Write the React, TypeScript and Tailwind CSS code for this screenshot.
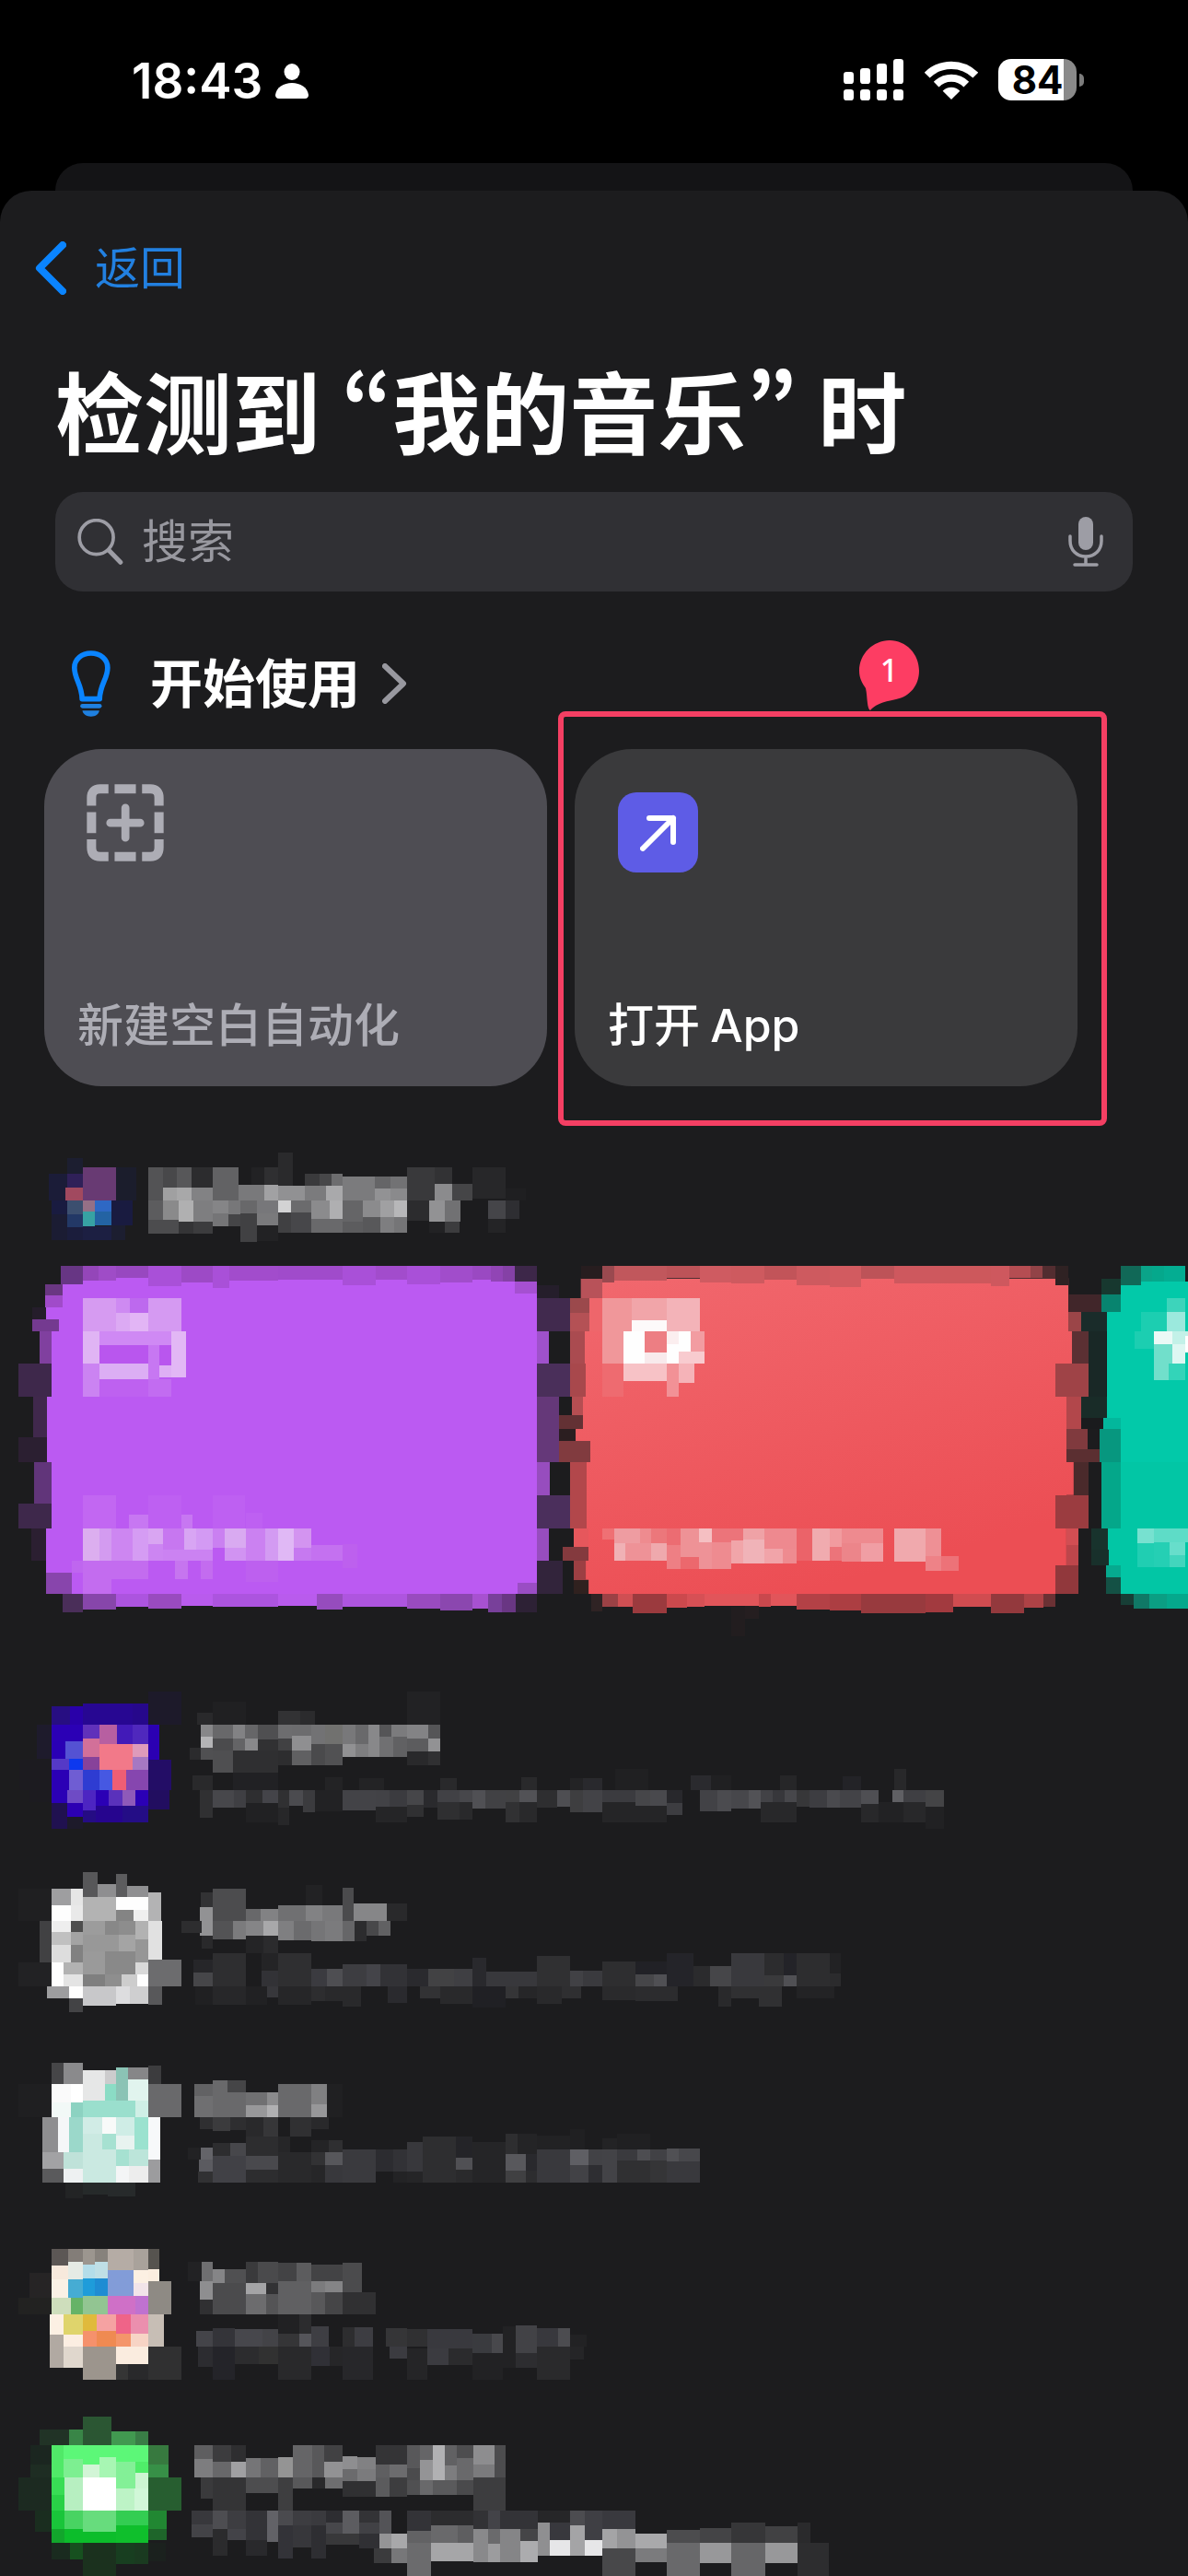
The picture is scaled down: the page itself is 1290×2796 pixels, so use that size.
import React from "react";

const cjk = "font-['Inter','Noto_Sans_CJK_SC',sans-serif]";

type MosaicProps = { tiles: string; viewBox: string; className: string };

/** Pixelated tiles, each written as "left top right bottom hex". */
function Mosaic({ tiles, viewBox, className }: MosaicProps) {
  return (
    <svg
      viewBox={viewBox}
      preserveAspectRatio="none"
      shapeRendering="crispEdges"
      aria-hidden="true"
      className={className}
    >
      {tiles
        .split(";")
        .map((t) => t.trim())
        .filter(Boolean)
        .map((t, i) => {
          const [x, y, r, b, c] = t.split(" ");
          return <rect key={i} x={x} y={y} width={+r - +x} height={+b - +y} fill={"#" + c} />;
        })}
    </svg>
  );
}

const sectionTiles = `
131 129 179 215 1b1c38;179 79 220 129 1c1e30;179 129 220 175 2f2058;220 109 309 215 683a73;309 109 363 215 1b1d2c;174 175 220 215 a1495f;
137 215 179 260 191b40;179 215 220 260 3c4f6f;220 215 252 252 957086;252 215 296 252 2e68c4;220 252 252 299 37a2a3;252 252 296 296 2363a3;296 215 353 295 191b40;
137 260 179 342 1b1c33;179 260 220 301 233866;179 301 220 342 1b1d3c;220 299 296 342 1c1f42;296 296 333 342 1c1e30;
394 109 434 215 535355;434 109 470 175 48484a;470 109 510 175 575759;510 109 566 175 2c2c2e;566 109 635 215 626264;
434 175 470 215 a0a0a1;470 175 510 215 a8a8a9;510 175 566 215 828284;394 215 434 277 5c5c5e;434 215 475 277 8a8a8b;475 215 514 284 b0b0b1;514 215 566 284 7e7e80;
394 277 475 321 4c4c4e;475 284 514 321 343436;514 284 566 321 3c3c3e;566 215 608 257 858587;608 215 639 260 777779;566 257 608 298 757577;608 260 639 298 454547;
669 109 703 166 222224;703 109 740 166 2f2f31;740 62 779 169 2a2a2c;635 166 703 215 79797b;703 166 740 215 a1a1a3;639 215 684 257 68686a;684 215 740 257 77777a;639 257 684 348 414143;684 257 740 295 7a7a7c;684 295 740 346 222224;
740 169 811 215 919193;740 215 774 254 d3d3d4;774 215 828 254 6b6b6d;740 254 774 320 404042;774 254 828 320 47474a;811 130 850 169 3a3a3c;850 130 882 169 474749;882 130 911 169 6d6d6f;811 169 867 215 7b7b7d;867 169 911 215 a9a9ab;828 215 877 275 8b8b8d;877 215 911 275 afafb1;828 275 911 320 69696b;
911 139 997 215 7b7b7d;997 139 1039 178 656567;1039 139 1083 178 727274;997 178 1039 215 929294;1039 178 1083 215 8a8a8c;911 215 965 284 656567;965 215 1012 269 8b8b8d;1012 215 1048 269 a0a0a2;1048 215 1083 269 b7b7b9;911 284 965 320 5c5c5e;965 269 1012 320 58585a;1012 269 1048 320 7e7e80;1048 269 1083 320 757577;
1083 109 1156 215 39393b;1156 109 1203 163 323234;1083 215 1142 281 2c2c2e;1156 163 1203 215 8b8b8d;1203 163 1257 215 454547;1257 109 1345 210 272729;1142 215 1183 284 929294;1183 215 1225 284 717173;1142 284 1183 320 222224;1183 284 1223 320 3c3c3e;1298 215 1345 275 454549;1345 215 1382 275 2e2e32;1298 275 1345 320 242426;1345 178 1398 215 1f1f21`;

const violetTiles = `
220 460 1370 490 bb5af2;137 485 1428 1480 bb5af2;162 426 220 485 673684;220 426 262 474 9446b9;262 426 309 474 9f4cc7;309 426 394 465 9848c0;394 426 483 490 a950d8;483 426 566 479 9d4ac6;566 426 609 497 a950d8;609 426 740 474 a24ccc;740 426 911 471 a04bcb;911 426 1000 488 a950d8;1000 426 1083 471 a24ccc;1083 426 1171 485 a950d8;1171 426 1257 479 a14dcb;1257 426 1306 471 9a49c2;1306 426 1338 476 9145b5;1338 426 1370 476 8541a6;1370 426 1428 476 3d2749;
1370 476 1428 515 a550d1;
120 485 167 521 6a3782;120 521 167 559 a04bc9;122 559 167 598 bb5af2;86 559 122 598 251d2b;86 598 157 636 743a90;105 636 137 740 80409f;49 740 137 846 3e284b;125 846 137 1055 bb5af2;88 846 125 976 40284c;49 976 125 1055 2b1f31;91 1055 137 1163 61357a;91 1163 137 1189 61357a;49 1189 137 1269 3e284b;122 1269 137 1411 bb5af2;84 1269 122 1372 2b1f31;122 1411 191 1478 8845ac;
1428 489 1487 530 251e2b;1428 530 1517 636 412a4e;1428 636 1460 740 9f51cb;1428 740 1517 846 4a2f5a;1428 846 1487 1055 653879;1428 1055 1463 1163 974dbe;1428 1163 1517 1269 4b2f5c;1428 1269 1460 1372 974dbe;1428 1372 1497 1478 32243b;1377 1444 1428 1478 9a4dc4;
167 1478 220 1537 4a2e59;220 1478 309 1530 8746aa;309 1478 394 1521 ac54df;394 1478 483 1527 994bbf;483 1478 566 1518 b95bed;566 1478 740 1521 ac54df;740 1478 843 1518 b95bed;843 1478 911 1530 964cbd;911 1478 1083 1521 ae55df;1083 1478 1171 1527 994bbf;1171 1478 1257 1532 8b47af;1257 1478 1298 1527 a751d0;1298 1478 1335 1538 78409a;1335 1478 1372 1538 693683;1372 1478 1428 1538 2d2135;
220 530 309 636 d69bf1;309 530 345 577 ce8af2;345 530 394 577 bd69ee;394 530 483 636 d59af2;309 577 345 636 dcaaf3;345 577 394 636 e2b5f5;220 636 265 740 e0b4f4;265 636 456 680 cf89f4;456 636 495 783 e2b7f5;265 680 394 740 b956ee;394 680 424 846 c777f2;424 680 456 746 b956ee;424 746 456 783 deaff4;265 740 394 790 dcaef4;220 740 265 846 cb83f2;394 790 456 846 c26cf1;265 790 394 846 be61f0;
220 1163 309 1269 c267f2;394 1163 483 1269 be60f2;566 1163 651 1269 be60f2;343 1225 394 1269 c777f2;483 1225 511 1269 c777f2;653 1219 697 1269 be60f2;220 1269 265 1372 dcaeef;265 1269 296 1372 d39bf0;296 1269 353 1372 cd86f1;353 1269 394 1372 d59cf3;394 1269 434 1318 d9a5f2;394 1318 434 1372 cc85f2;434 1269 490 1372 c777f0;434 1337 566 1372 cb82f2;490 1269 523 1337 d8a5f3;523 1269 566 1337 d39af3;566 1269 598 1330 ca80f1;598 1269 653 1330 d9aaf1;598 1330 653 1372 d193f2;653 1269 706 1372 cb81f1;706 1269 740 1372 d39bf2;740 1269 782 1372 e0b8f5;782 1269 828 1330 d394f0;782 1330 828 1372 c679f0;828 1322 911 1372 c471f0;911 1320 951 1395 bd60ee;220 1372 296 1478 c36cef;296 1372 394 1432 c36cef;465 1372 500 1432 c675ef;534 1372 566 1432 c36cef;653 1372 740 1440 bd60ef;191 1372 220 1411 bf66ef`;

const coralTiles = `
70 442 123 501 b85259;91 501 123 602 ee666b;70 403 123 442 271d1f;123 403 152 454 9a494f;152 403 282 448 c1575c;282 403 364 440 bd5358;364 403 441 454 cf5b61;441 403 523 457 ce5a5f;523 403 602 445 c25459;602 403 684 461 ce5a5f;684 403 761 467 d25b60;761 403 843 442 bd5358;843 403 956 456 ce585e;956 403 1082 457 cd585c;1082 403 1127 465 ce585e;1127 403 1179 440 b54d52;1179 403 1209 440 924347;1209 403 1241 440 532d30;1241 403 1273 461 2f2223;1273 490 1354 543 41262a;
43 501 91 545 9b494c;43 545 91 602 b45155;43 602 80 700 aa4b50;43 700 82 801 a8484c;48 801 75 857 b54e52;16 857 75 899 633134;16 899 57 935 2b1e20;16 935 93 1000 813b3f;43 1000 84 1201 b2474b;52 1201 89 1257 e6575c;25 1257 89 1298 843a3e;52 1298 82 1357 9c3f43;52 1357 89 1400 30211f;
1273 543 1304 602 9b4548;1282 602 1323 700 5b3033;1241 700 1323 801 9f4347;1268 801 1304 899 b2474b;1268 899 1320 960 803a3e;1268 960 1350 1000 5b2f31;1286 1000 1323 1100 4a2a2b;1241 1100 1323 1201 9b3c40;1268 1201 1298 1251 d14e53;1268 1251 1298 1313 bd464b;1241 1313 1298 1400 91383c;
95 1400 123 1453 2f2324;123 1400 161 1439 9b4145;161 1400 198 1439 cf4f53;198 1400 282 1459 9b3a3e;282 1400 332 1441 cb494d;332 1400 375 1439 d65055;375 1400 509 1436 e1555a;509 1400 539 1439 c9484d;539 1400 602 1436 e1555a;602 1400 684 1448 b34146;684 1400 761 1450 ac3e42;761 1400 920 1459 983a3e;920 1400 989 1456 a23a3f;989 1400 1082 1440 d04c50;1082 1400 1164 1459 93393d;1164 1400 1211 1441 ae4246;1211 1400 1241 1439 6b3134;475 1436 509 1475 251e20;441 1439 475 1528 221d1f;
123 501 195 700 f0979a;195 501 282 568 f1a5a9;282 501 364 602 f3b3b8;195 568 282 602 fdfafa;175 602 227 700 fefefe;227 602 282 666 ed7e83;227 666 282 700 f8eaec;282 602 311 641 fbeeef;311 602 341 664 fefefe;282 641 311 700 fefefe;341 602 375 664 f29ca1;311 664 375 700 f8cbcf;175 700 282 753 f7c2c6;282 700 311 801 f29196;311 700 350 759 f5b3b8;123 700 175 801 ee6b70;
123 1201 152 1234 ef7074;152 1201 216 1245 ee9ca1;152 1245 180 1298 f0b1b5;180 1245 243 1298 ee9297;216 1201 243 1245 ee8b8f;243 1201 282 1245 ec777b;243 1245 282 1298 efa9ad;282 1201 316 1251 ec6c72;282 1251 316 1324 ee7f84;316 1201 361 1287 ee9296;316 1287 361 1324 ec686d;361 1201 393 1242 f5bfc2;361 1242 393 1324 ee9297;393 1201 470 1242 ec747a;393 1242 441 1324 ee8b90;441 1238 470 1307 f1a5a9;470 1201 523 1236 efa2a6;470 1236 523 1307 f0b3b8;523 1201 602 1263 ee898f;523 1263 568 1307 f1a4a9;568 1263 602 1307 ee8b90;
602 1201 641 1298 eb6369;641 1201 684 1298 f0abaf;684 1201 714 1257 f19b9f;684 1257 714 1298 ec747a;714 1201 816 1245 ee8a8f;714 1245 761 1301 ec858a;761 1245 816 1301 f09ea4;843 1201 920 1301 f0a9ad;920 1201 959 1285 ee9095;920 1285 959 1330 ee8287;959 1285 1002 1330 ed7278`;

const tealTiles = `
1402 450 1568 1400 02c9a9;1402 1000 1568 1400 02c6a5;1368 543 1402 865 02c9a9;1354 442 1402 490 17382f;1354 490 1402 543 08846f;1402 403 1452 461 116857;1452 403 1480 450 0aa489;1480 403 1509 450 05a88c;1509 403 1561 450 04ad92;1304 543 1369 602 1a2c2a;1323 602 1367 700 192826;1323 700 1366 801 192826;1304 801 1368 865 192c28;1304 865 1359 899 1a1b1d;1359 865 1402 899 03b79c;1350 899 1402 1000 07977f;1354 1000 1402 1201 04a78a;1370 1201 1402 1313 02c6a5;1329 1201 1370 1265 18332d;1329 1265 1373 1313 18302b;1366 1313 1402 1350 06aa8f;1366 1350 1402 1400 145145;1402 1400 1434 1434 173e36;1434 1400 1473 1445 107866;1473 1400 1516 1445 0b9e83;1516 1400 1568 1445 05a88c;
1452 543 1516 602 1cceb1;1436 602 1484 655 1cceb1;1516 501 1561 543 3dd4bb;1516 543 1561 602 9be9dd;1484 602 1529 641 ebf9f6;1529 602 1568 641 c3f1e8;1484 641 1529 700 71dfcb;1529 641 1561 700 def7f2;1484 700 1520 750 71dfcb;1520 700 1561 750 33d4b9;1561 616 1568 666 ffffff;
1443 1201 1484 1245 77e1d0;1484 1201 1568 1242 5edcc7;1443 1245 1484 1318 20ceb2;1484 1242 1523 1318 25cfb4;1523 1242 1561 1283 67decb;1523 1283 1561 1318 42d5bd`;

type AppRow = { icon: string; text: string; iconBox: string; textBox: string; height: string };

const rows: AppRow[] = [
  {
    height: "h-[200px]",
    iconBox: "0 90 560 600",
    textBox: "560 90 1960 600",
    icon: `
451 108 551 216 1d1a2a;113 216 157 326 1e1b2c;58 329 157 429 1c1b20;90 429 157 468 1c1b20;157 156 213 216 270e82;213 156 252 216 2900a9;252 147 403 216 270792;403 147 451 216 26088b;157 216 252 270 2b00b5;157 270 200 326 2a00b5;200 270 252 326 5452d3;252 216 302 262 6031ba;302 216 356 279 b75fa1;356 216 403 279 421ab8;403 216 451 279 4f28bd;451 216 484 329 2b00b2;252 262 302 321 d27099;302 279 403 363 f27989;403 279 451 321 de9bbb;403 321 451 363 a678c2;157 326 210 363 5539c7;210 326 252 363 0d38ef;252 321 302 363 87429a;157 363 210 429 2b00b5;210 363 252 429 6f5dd3;252 363 302 429 2e3cd2;302 363 342 429 4658e2;342 363 384 429 ee5e74;384 363 451 429 8646af;451 329 521 429 230d66;451 429 515 491 220e60;
157 429 204 471 2b00b5;204 429 252 471 6e4bc5;252 429 291 495 4d25c2;291 429 330 480 2b00b5;330 429 372 480 5a31bb;372 429 412 480 8e5ab9;412 429 451 480 2b00b5;204 471 252 516 2c00b3;157 471 204 554 201150;252 495 291 534 250c84;291 480 372 534 26058e;372 480 451 534 240d86;204 516 252 554 1d1a2a`,
    text: `
599 177 647 216 29292b;647 141 748 216 202022;846 171 914 216 323234;914 171 958 216 2b2b2d;1238 108 1338 216 222224;610 216 647 255 878789;610 255 647 291 b4b4b6;577 291 610 329 2b2b2d;610 291 647 329 505052;647 216 708 261 68686a;708 216 745 261 828284;745 216 784 261 666668;784 216 846 264 4f4f51;647 261 708 300 4b4b4d;708 261 745 300 646466;745 261 784 300 88888a;784 264 846 300 313133;647 300 708 372 4f4f51;708 300 846 372 2f2f31;
846 216 888 261 6d6d6f;846 261 888 300 414143;846 300 888 348 2d2d2f;888 216 946 252 6c6c6e;888 252 946 300 8f8f91;888 300 946 348 606062;946 216 989 279 727274;989 216 1042 279 71716f;946 279 989 348 4a4a4c;989 279 1042 348 515153;1042 216 1081 279 78787a;1081 216 1120 279 69696b;1120 216 1154 321 88888a;1042 279 1081 321 919193;1081 279 1120 321 7e7e80;1154 216 1190 255 555557;1190 216 1238 255 7b7b7d;1154 255 1196 321 707072;1196 255 1238 321 616163;1238 216 1302 261 838385;1302 216 1338 261 555557;1238 261 1302 303 5c5c5e;1302 261 1338 303 929294;1238 303 1302 348 29292b;1302 303 1338 348 303032;
585 381 647 429 29292b;708 372 846 429 212124;989 387 1042 429 232325;1092 390 1168 429 232325;1338 390 1388 429 29292b;608 429 647 519 303032;647 429 711 486 47474b;711 429 748 486 3f3f43;748 429 798 471 2e2e30;798 429 846 471 444449;748 471 846 534 212123;846 429 879 486 303032;846 486 879 543 272729;879 429 921 480 4b4b4f;921 429 958 500 3b3b3e;958 429 1042 498 222224;1042 429 1142 495 434347;1142 429 1184 483 424246;1184 429 1238 483 3b3b3f;1142 483 1238 534 252527;1238 429 1288 477 464649;1238 477 1288 516 303032;1288 429 1330 486 2a2a2d;1330 429 1396 468 414145;1396 429 1436 468 47474b;1330 468 1396 525 2f2f31;1396 468 1436 525 29292b;1436 429 1476 489 505054;1476 429 1537 489 414144;
1537 429 1579 468 414143;1537 468 1579 534 313133;1579 429 1632 468 525256;1579 468 1632 534 29292b;1585 387 1632 429 29292b;1632 429 1694 486 2e2e30;1694 429 1733 483 4e4e52;1733 390 1771 429 232325;1771 390 1831 429 29292d;1733 429 1772 500 3e3e40;1772 429 1831 500 434347;1831 429 1932 468 3b3b3f;1831 468 2027 534 252527;1870 360 1971 429 202022;1932 429 1977 480 464649;1977 429 2027 480 49494d;2027 429 2075 471 28282c;2027 471 2075 510 3d3d41;2100 381 2162 429 2a2a2e;2162 381 2223 429 202022;2128 429 2180 498 424246;2180 429 2223 498 4b4b4f;2223 429 2276 489 47474b;2276 429 2313 489 525256;2313 429 2349 468 424246;2349 429 2386 468 37373b;2313 468 2422 534 28282a;2372 381 2422 429 262628;2386 429 2422 468 47474b;2422 429 2461 483 373739;2461 429 2514 486 3d3d41;2514 429 2553 486 4a4a4e;2553 429 2618 486 434347;2562 384 2618 429 232327;2618 429 2671 474 4f4f53;2618 474 2671 534 28282a;2671 468 2747 534 222224;2719 360 2755 429 28282a;2713 429 2747 468 606064;2747 429 2814 468 3f3f43;2747 468 2814 534 28282a;2814 429 2870 483 444446;2814 483 2870 554 212123`,
  },
  {
    height: "h-[200px]",
    iconBox: "0 690 560 600",
    textBox: "560 690 1960 600",
    icon: `
56 750 157 855 1f1f21;252 696 297 777 575759;297 735 353 777 8e8e90;353 702 386 777 5c5c5e;386 741 451 777 8f8f91;157 750 216 804 9e9ea0;216 750 252 804 e6e6e6;451 762 490 855 b3b3b4;157 804 216 855 fefefe;216 804 252 855 e9e9e9;252 777 353 855 b3b3b3;353 777 451 819 fefefe;353 819 406 855 848484;406 819 451 855 efefef;120 855 157 990 414143;157 855 216 891 eeeeee;216 855 252 891 4e4e4e;157 891 216 933 c0c0c0;216 891 252 933 a3a3a3;157 933 216 990 dddddd;216 933 252 990 818181;252 855 319 900 9c9c9c;319 855 361 900 888888;361 855 412 900 8d8d8d;412 855 451 915 b2b2b2;252 900 361 954 989898;361 900 412 954 a4a4a4;412 915 451 990 969696;451 855 493 981 e1e1e1;252 954 319 1029 9a9a9a;319 954 412 1029 898989;412 990 451 1029 d9d9d9;56 990 157 1068 222224;157 990 193 1068 fefefe;193 990 252 1029 b2b2b2;193 1029 252 1068 e4e4e4;252 1029 319 1068 7f7f7f;319 1029 370 1068 8e8e8e;370 1029 417 1068 cdcdcd;417 1029 451 1068 fefefe;451 981 551 1068 6c6c6e;143 1068 210 1107 9d9d9f;210 1068 252 1107 fefefe;210 1107 252 1152 434345;252 1068 353 1131 c8c8ca;353 1068 395 1125 dddddf;395 1068 451 1125 cfcfd0;451 1068 493 1128 58585a`,
    text: `
610 762 647 810 323234;647 750 748 855 4c4c4e;608 810 647 903 929294;552 855 613 894 2d2d2f;647 855 708 915 535355;708 855 748 915 7b7b7d;748 816 792 855 68686a;792 816 846 855 828284;748 855 801 903 858587;801 855 846 903 a8a8aa;846 804 930 855 707072;930 738 980 804 222224;930 804 980 855 828284;980 804 1042 855 79797b;846 855 893 918 7f7f81;893 855 946 918 6b6b6d;946 855 989 921 757577;989 855 1042 921 7b7b7d;1042 747 1075 855 4b4b4d;1042 855 1078 921 666668;1075 798 1176 855 868688;1176 798 1238 855 29292b;1078 855 1114 921 2c2c2e;1114 855 1151 903 48484a;1151 855 1187 903 616163;613 903 647 945 29292b;748 903 801 960 242426;801 903 846 960 2b2b2d;
588 981 647 1023 262629;588 1023 647 1068 464649;594 1068 647 1128 202022;647 960 748 1068 2e2e30;647 1068 748 1128 272729;795 960 846 1017 242426;795 1017 846 1068 323236;748 1068 812 1128 212123;812 1068 846 1104 37373b;846 960 946 1068 2f2f31;846 1068 946 1128 262628;946 1011 994 1068 3b3b40;994 1011 1042 1068 4e4e52;946 1068 989 1116 2d2d2f;989 1068 1042 1116 29292b;1042 996 1114 1068 3d3d41;1114 996 1156 1068 444449;1156 996 1238 1068 323236;1042 1068 1098 1134 29292b;1179 1068 1238 1122 2a2a2e;1238 1011 1302 1068 2a2a2e;1302 1011 1380 1068 424244;1380 1011 1436 1068 3f3f43;1277 1068 1338 1107 323234;1338 1068 1436 1125 29292b;1436 975 1478 1068 29292d;1478 1020 1632 1068 38383c;1436 1068 1537 1137 202024;1537 1068 1576 1107 353537;1576 1068 1632 1107 262628;1632 969 1733 1068 303032;1632 1068 1708 1125 29292b;1708 1068 1767 1107 2f2f31;1733 1017 1771 1068 414145;1771 1017 1831 1068 3a3a3e;1831 987 1932 1068 2e2e30;1831 1068 1932 1113 2a2a2c;1932 987 2027 1029 212126;1932 1029 1989 1068 464649;1989 1029 2027 1068 505054;1932 1068 2061 1116 2c2c2e;2027 960 2108 1068 242429;2108 1002 2159 1068 2b2b2d;2159 1002 2223 1068 464649;2184 1068 2223 1134 29292b;2223 960 2324 1068 39393d;2223 1068 2307 1107 303032;2307 1068 2377 1134 303032;2324 960 2383 1032 2c2c2e;2324 1032 2383 1068 3a3a3c;2383 960 2422 1032 232328;2383 1032 2422 1068 505054;2422 960 2523 1068 2d2d2f;2523 960 2556 1026 222224;2523 1026 2556 1068 2b2b2d;2422 1068 2537 1107 232325`,
  },
  {
    height: "h-[200px]",
    iconBox: "0 90 560 600",
    textBox: "560 90 1960 600",
    icon: `
56 186 157 294 1f1f21;157 117 193 186 464648;193 117 252 186 8a8a8c;252 141 319 240 e6e7e7;319 141 353 186 cccccd;353 132 389 240 8bc3b5;389 132 451 171 868688;451 126 490 186 3c3c3e;157 186 216 246 fafafa;216 186 252 246 ffffff;319 186 353 240 8bdcc5;389 171 451 240 e1f4ee;451 186 551 294 69696b;157 246 216 294 f2f9f7;216 246 252 294 8cd2c1;252 240 412 294 9adfcd;412 240 451 294 cfefe6;129 294 176 408 8e8e90;176 294 210 408 f5f7f8;210 294 252 408 9bd8ca;252 294 311 348 d1ece6;311 294 353 348 f8faf9;353 294 409 354 cfede6;409 294 451 399 9be2cf;451 294 487 432 f7f9fa;252 348 353 507 cae9e1;311 348 353 399 a6e1d1;353 354 409 399 e8f3f0;129 408 193 462 a2a2a4;193 408 252 462 bfe2d9;353 399 392 453 a6e1d1;392 399 451 453 bce5da;129 462 193 507 5a5a5c;193 462 252 507 eef1f2;353 453 392 507 f4f5f6;392 453 451 507 ededed;451 432 487 507 9c9c9e;199 507 252 558 232425;252 507 328 546 262a2a;328 507 412 552 272a2b`,
    text: `
591 186 647 225 626264;591 225 647 294 6f6f71;647 174 692 213 69696b;692 174 748 213 454547;647 213 748 294 69696b;748 213 812 255 707072;812 213 846 255 8b8b8d;748 255 812 294 98989a;812 255 846 294 b0b0b2;846 186 946 294 69696b;946 186 994 252 808082;946 252 994 294 979799;994 186 1042 294 202022;608 294 647 333 2f2f31;647 294 700 339 3b3b3d;700 294 748 336 2e2e30;748 294 801 357 29292b;801 294 846 357 363638;882 294 946 357 303032;946 294 1000 333 29292b;
571 393 608 432 222224;610 393 647 432 646469;605 432 647 471 5b5b60;602 471 647 507 313133;647 378 700 420 2d2d2f;700 378 748 420 47474b;647 420 748 507 414146;748 357 846 420 2d2d2f;748 420 846 465 49494d;748 465 846 507 2d2d2f;846 357 882 408 262628;846 408 946 507 29292b;946 369 1000 408 242426;1000 369 1042 408 2f2f31;946 408 989 450 323234;989 408 1042 450 57575b;989 450 1042 507 38383c;946 450 989 507 262628;1042 399 1142 507 3a3a3e;1142 399 1196 471 2c2c30;1196 399 1238 471 323236;1196 471 1238 507 232325;1238 375 1285 471 38383c;1238 471 1285 507 252527;1285 357 1386 507 2e2e30;1386 357 1436 426 242428;1386 426 1436 465 505054;1386 465 1436 507 2a2a2c;1436 375 1537 507 252527;
1537 348 1573 414 2e2e30;1573 348 1632 414 242426;1537 414 1599 468 58585c;1537 468 1599 507 404042;1599 414 1632 468 29292d;1599 468 1632 507 2d2d2f;1632 354 1733 399 222224;1632 399 1733 507 39393d;1733 333 1777 399 202022;1733 399 1788 450 5f5f64;1733 450 1788 507 424246;1788 399 1831 450 424246;1788 450 1831 507 2e2e32;1831 363 1876 399 232325;1831 399 1876 507 434347;1876 348 1977 399 202022;1876 399 1938 435 3a3a3e;1938 399 1977 435 4d4d51;1876 435 1977 507 303032;1977 399 2027 435 414145;1977 435 2027 507 353537;2027 396 2064 438 505054;2064 396 2128 438 47474b;2027 438 2128 507 39393d`,
  },
  {
    height: "h-[190px]",
    iconBox: "0 690 560 570",
    textBox: "560 690 1960 570",
    icon: `
90 801 157 882 262425;56 882 157 936 222221;157 723 207 777 5c5755;207 723 252 765 837d78;252 723 288 774 9c968f;288 723 328 765 87827c;328 723 406 792 b5aca5;406 723 451 792 a9a29b;451 723 484 789 56534f;157 777 207 822 f7e9dc;207 765 252 822 e6ebe5;252 774 288 819 b4dde9;288 765 328 819 bfdfe6;328 792 406 876 829cd8;406 792 451 834 fcf0e3;451 789 484 828 fbeee0;157 822 207 882 faf1e5;207 822 252 882 46acd3;252 819 288 876 1e9cda;288 819 328 876 1e8cd3;406 834 451 876 f2e4e9;451 828 521 936 8e8a84;157 882 216 936 cedebc;216 882 252 936 66b367;252 876 328 936 92c592;328 876 412 936 cf70c7;412 876 451 936 bf72d0;151 936 193 1002 fcf0e3;193 936 252 1002 dfd46c;252 936 294 990 e0ba3c;294 936 353 990 f5a2a2;353 936 398 999 ef6488;398 936 451 999 eb8fae;451 936 498 1041 c7beb5;193 1002 252 1041 fceee2;252 990 294 1041 f5916c;294 990 353 1041 ef8a52;353 999 398 1041 f4956a;398 999 451 1041 f7d4c5;151 1002 193 1110 b1a9a2;193 1041 252 1110 e0d7cd;252 1041 353 1149 9c958d;353 1041 451 1098 faecdf;353 1098 389 1149 353535;389 1098 451 1149 29292b;451 1041 551 1149 303031`,
    text: `
571 765 613 828 222224;613 765 647 828 6f6f71;608 828 647 888 8e8e90;608 888 647 936 303032;647 789 683 834 858587;683 789 748 834 505052;647 834 748 936 4b4b4d;748 765 784 834 3a3a3c;784 765 846 834 4a4a4c;748 834 809 870 a4a4a6;809 834 846 870 323234;748 870 809 936 6c6c6e;809 870 846 936 545456;846 768 902 828 434345;902 768 946 828 5c5c5e;846 828 946 936 606062;946 774 1042 828 434345;946 828 989 864 7b7b7d;989 828 1042 864 848486;946 864 989 936 58585a;989 864 1042 936 454547;1042 768 1100 864 4b4b4d;1042 864 1142 936 303032;846 936 910 999 212123;910 936 946 999 2c2c2e;
596 990 647 1041 444449;602 1041 647 1107 2c2c30;647 981 714 1041 343439;714 984 798 1041 47474c;798 984 846 1041 434347;647 1041 714 1149 242429;714 1041 787 1098 2c2c2e;787 1041 846 1098 313131;846 999 910 1041 353537;910 999 946 1041 55555a;946 975 1000 1041 3e3e43;846 1041 946 1149 29292b;946 1041 1002 1104 303036;1002 1041 1042 1104 262628;1042 978 1078 1041 2d2d2f;1078 978 1134 1041 3d3d42;1042 1041 1134 1149 27272a;1173 981 1238 1041 353537;1184 1041 1238 1080 3b3b40;1238 984 1299 1041 303032;1299 984 1436 1047 39393e;1238 1047 1299 1149 252527;1299 1047 1363 1101 3b3b40;1363 1047 1436 1101 2b2b2d;1436 999 1495 1062 3a3b3f;1495 999 1529 1062 48484c;1436 1062 1529 1149 222224;1529 975 1568 1110 222224;1568 972 1632 1062 424246;1568 1062 1632 1110 2d2d30;1632 981 1697 1041 38383d;1697 981 1733 1041 4c4c50;1632 1041 1733 1149 2a2a2c;1733 1002 1783 1041 222224;1733 1041 1775 1083 252527`,
  },
  {
    height: "h-[176px]",
    iconBox: "0 180 348 528",
    textBox: "348 180 1219 528",
    icon: `
75 231 131 282 213326;131 231 157 282 398547;157 189 211 282 2b5633;211 237 256 282 419950;256 237 280 282 397d46;57 282 98 345 1b2620;57 345 98 387 1e2d23;35 387 98 495 1c2a21;66 495 98 564 1a2d1f;98 282 120 387 50e968;120 282 280 336 5cf778;120 327 157 387 7def91;157 321 188 345 5cf778;157 345 188 387 d2f5d6;188 321 220 387 a7f6b3;220 336 256 423 83f097;256 336 280 372 4fed69;256 372 280 423 ccf5d2;280 282 319 345 37793f;280 345 319 387 379047;98 387 122 444 38dd55;98 444 122 495 29d147;122 387 157 495 b7efc1;157 387 220 495 ffffff;220 423 254 495 bdf3c6;254 423 280 495 d1f7d8;280 387 343 495 275e30;98 495 122 555 19c53a;122 495 157 555 48d362;157 495 220 564 67dc7d;220 495 280 543 33cd52;98 555 122 600 12a62c;122 555 157 600 0cbd2b;157 564 220 600 0cbd2b;220 543 280 600 0fbf2c;280 495 315 555 218732;280 555 315 591 1e652a;98 600 132 654 1a2b1f;132 600 157 654 17501f;157 600 220 708 1b311e;220 600 254 669 183e20;254 600 280 669 1a3a20;280 600 314 660 1b211e`,
    text: `
368 282 402 327 5e5e60;402 282 436 336 3c3c3e;436 282 465 336 2e2e30;368 327 402 387 7d7d7f;402 336 436 387 68686a;436 336 465 387 a0a0a2;465 324 493 387 757577;493 324 526 387 616163;526 321 554 387 949494;554 282 590 387 656567;590 282 613 387 58585a;613 282 648 336 414143;613 336 648 387 929294;648 318 676 360 8e8e90;676 321 711 360 818183;648 360 676 399 6b6b6d;676 360 711 399 7b7b7d;711 282 770 345 343436;711 345 737 387 5f5f61;737 345 770 387 6c6c6e;770 282 794 357 58585a;794 282 819 330 656567;819 282 840 396 b1b1b3;840 282 864 348 616163;864 282 894 324 4d4d4f;794 330 819 396 949496;770 357 794 396 4b4b4d;840 348 864 396 7d7d7f;864 324 894 396 69696b;894 282 934 345 8d8d8f;934 282 955 387 4c4c4e;894 345 934 387 7b7b7d;
380 387 402 456 3a3a3c;402 387 465 495 343436;465 387 526 438 4d4d4f;526 387 554 495 3e3e40;554 387 590 423 58585a;590 387 615 423 29292b;615 387 648 423 6e6e70;648 399 711 450 303032;711 387 737 450 5b5b5d;737 387 770 450 3d3d3f;770 396 794 444 505052;794 396 819 444 69696b;819 396 864 444 5a5a5c;864 396 894 444 4a4a4c;894 387 955 495 3d3d3f;
362 495 402 540 38383c;402 495 430 555 4d4d51;430 495 465 555 3d3d41;362 540 402 582 434347;402 555 430 642 2b2b2d;430 555 465 591 434348;465 495 504 591 333337;465 591 504 642 29292c;504 495 526 597 626267;526 495 554 543 4a4a4e;554 495 589 543 3d3d41;589 495 617 543 3a3a3e;617 495 648 534 2d2d31;526 543 554 651 333338;554 543 589 615 37373b;589 543 617 651 2e2e32;617 534 648 570 47474b;617 570 679 606 38383a;648 495 679 570 5c5c60;679 495 718 534 333336;679 534 718 570 414145;718 495 739 570 535357;679 570 718 618 303034;718 570 739 618 949496;739 570 770 618 a8a8aa;706 618 739 666 3b3b3d;739 618 770 666 777779;
770 495 814 561 333337;814 495 894 543 2c2c2e;770 561 814 600 626264;770 600 814 708 6b6b6d;814 543 866 600 69696b;866 543 894 600 5e5e60;814 600 894 660 a6a6a8;894 495 923 555 323235;923 495 946 555 434348;946 495 1016 555 333337;894 555 923 663 89898b;923 555 946 603 6a6a6c;923 603 946 663 9c9c9e;946 555 984 663 858587;984 555 1016 594 454547;984 594 1016 663 acacae;1016 534 1040 642 8f8f91;1016 495 1078 534 262628;1040 534 1078 591 38383d;1078 495 1106 543 4c4c50;1106 495 1139 591 3f3f44;1078 543 1106 642 a4a4a6;1040 591 1078 642 e6e6e8;1106 591 1139 642 e6e6e8;1139 495 1202 555 39393e;1139 555 1167 618 a4a4a6;1167 555 1202 618 939395;1139 618 1202 708 48484a;1202 570 1261 618 a9a9ab;1202 618 1261 663 7b7b7d;1261 558 1324 600 4c4c4e;1261 600 1324 708 69696b;1324 552 1383 600 444446;1324 600 1383 666 98989a;1383 534 1446 600 363638;1383 600 1446 708 666668;1446 546 1507 600 414143;1446 600 1507 666 98989a;1507 534 1533 600 2a2a2c;1507 600 1567 708 2d2d2f`,
  },
];

function StatusBar() {
  return (
    <header className="flex h-[177px] items-start justify-between bg-black pt-14 pr-[113px] pl-[143px] text-white">
      <div className="flex h-16 items-center gap-[14px]">
        <span className="text-[53px] leading-none font-semibold">18:43</span>
        <svg viewBox="0 0 36 38" className="h-[38px] w-9" fill="currentColor" aria-hidden="true">
          <ellipse cx="18" cy="9" rx="8.5" ry="9" />
          <path d="M4 38C1 38 0 36 0 34C1 26 9 21 18 21S35 26 36 34C36 36 35 38 32 38Z" />
        </svg>
      </div>
      <div className="flex h-[61px] items-center">
        <svg viewBox="108 72 195 135" className="h-[45px] w-[65px]" fill="currentColor" aria-hidden="true">
          {[114, 102, 87, 72].map((top, i) => (
            <g key={top}>
              <rect x={108 + i * 54} y={top} width="33" height={153 - top} rx="10" />
              <rect x={108 + i * 54} y="171" width="33" height="36" rx="10" />
            </g>
          ))}
        </svg>
        <svg viewBox="371 75 174 126" className="ml-[23px] h-[42px] w-[58px]" fill="none" stroke="currentColor" aria-hidden="true">
          <path d="M379 122A112 112 0 0 1 537 122" strokeWidth="25" />
          <path d="M409 152A69 69 0 0 1 507 152" strokeWidth="24" />
          <path d="M458 201L430 173A39 39 0 0 1 486 173Z" fill="currentColor" stroke="none" />
        </svg>
        <div className="ml-[22px] flex h-[45px] w-[85px] items-center justify-center rounded-[14px] bg-linear-to-r from-white from-84% to-[#8a8a8a] to-84%">
          <span className="text-[42px] leading-none font-bold text-black">84</span>
        </div>
        <div className="ml-[3px] h-[14px] w-[5px] rounded-r-full bg-[#7c7c7c]" />
      </div>
    </header>
  );
}

function SearchField() {
  return (
    <label className="mx-[60px] mt-6 flex h-[108px] items-center rounded-[30px] bg-[#303034] pr-8 pl-6 text-[#9d9da5]">
      <svg viewBox="71 38 148 149" className="size-[50px] shrink-0" fill="none" stroke="currentColor" aria-hidden="true">
        <circle cx="132" cy="98" r="55" strokeWidth="11" />
        <path d="M173 141L210 179" strokeWidth="15" strokeLinecap="round" />
      </svg>
      <input
        type="search"
        aria-label="搜索"
        placeholder="搜索"
        className="ml-5 h-full min-w-0 flex-1 bg-transparent text-[50px] outline-none placeholder:text-[#98989f]"
      />
      <svg viewBox="0 0 38 54" className="h-[54px] w-[38px] shrink-0" aria-hidden="true">
        <rect x="11" y="0" width="16" height="36" rx="8" fill="currentColor" />
        <path d="M2 21V26C2 36 9 43 19 43S36 36 36 26V21M19 43V51M7 52H31" fill="none" stroke="currentColor" strokeWidth="3.5" strokeLinecap="round" />
      </svg>
    </label>
  );
}

function GettingStarted() {
  return (
    <section className="mt-[58px]">
      <a href="#start" className="flex h-[84px] items-center pl-[78px] text-white">
        <svg viewBox="56 464 125 216" className="h-[72px] w-[42px]" aria-hidden="true">
          <path d="M89 622C88 575 64 557 64 520C64 492 88 473 118 473S172 492 172 520C172 557 147 575 146 622Z" fill="none" stroke="#0a84ff" strokeWidth="17" strokeLinejoin="round" />
          <rect x="83" y="638" width="70" height="14" rx="7" fill="#1f80e0" />
          <path d="M90 660H145C143 672 133 679 118 679S92 672 90 660Z" fill="#1f80e0" />
        </svg>
        <h2 className="ml-[43px] text-[57px] leading-none font-bold">开始使用</h2>
        <svg viewBox="0 0 27 44" className="ml-6 h-11 w-[27px]" fill="none" stroke="#98989f" strokeWidth="6" strokeLinecap="round" strokeLinejoin="round" aria-hidden="true">
          <path d="M3 3L23 22L3 41" />
        </svg>
      </a>
      <div className="mt-[29px] grid grid-cols-2 gap-[30px] pr-[120px] pl-12">
        <button className="flex h-[366px] flex-col items-start justify-between rounded-[62px] bg-[#4e4d53] pt-[38px] pr-9 pb-[30px] pl-9 text-[#adadb5]">
          <svg viewBox="104 902 251 251" className="ml-[10px] size-[84px]" fill="none" stroke="currentColor" aria-hidden="true">
            <path d="M120 972V946Q120 918 148 918H175M195 918H264M284 918H311Q339 918 339 946V972M339 993V1061M339 1081V1108Q339 1137 311 1137H284M264 1137H195M175 1137H148Q120 1137 120 1108V1081M120 1061V993" strokeWidth="30" />
            <path d="M230 979V1076M181 1028H278" strokeWidth="26" strokeLinecap="round" />
          </svg>
          <span className="text-[50px] leading-[72px] font-medium">新建空白自动化</span>
        </button>
        <div className="relative">
          <button className="flex h-[366px] w-full flex-col items-start justify-between rounded-[62px] bg-[#3a3a3c] pt-[47px] pr-9 pb-[30px] pl-9 text-white">
            <span className="ml-[11px] flex size-[87px] items-center justify-center rounded-[20px] bg-[#5e5ce6]">
              <svg viewBox="0 0 40 40" className="size-10" fill="none" stroke="currentColor" strokeWidth="6" strokeLinecap="round" strokeLinejoin="round" aria-hidden="true">
                <path d="M3 37L36 4M10 4H36V30" />
              </svg>
            </span>
            <span className="text-[50px] leading-[72px] font-medium">
              <span className="font-['Noto_Sans_CJK_SC',sans-serif]">打开 </span>App
            </span>
          </button>
          <div className="pointer-events-none absolute -top-[41px] -right-8 -bottom-[43px] -left-[18px] rounded-lg border-6 border-[#f43f63]" />
          <div className="absolute -top-[118px] left-[309px] h-[76px] w-[65px]">
            <svg viewBox="0 0 65 76" className="size-full" fill="#fd3d63" aria-hidden="true">
              <path d="M33 0C51 0 65 15 65 33C65 49 55 61 40 64C25 67 17 70 12 76C8 74 9 60 7 52C3 46 0 41 0 33C0 15 15 0 33 0Z" />
            </svg>
            <span className="absolute inset-x-0 top-0 text-center font-['Noto_Sans',sans-serif] text-[34px] leading-[64px] font-medium text-white">1</span>
          </div>
        </div>
      </div>
    </section>
  );
}

export default function App() {
  return (
    <div className={`min-h-screen overflow-hidden bg-black ${cjk}`} lang="zh-CN">
      <StatusBar />
      <div className="mx-[60px] h-[30px] rounded-t-[30px] bg-[#141416]" />
      <main className="rounded-t-[34px] bg-[#1c1c1e]">
        <nav className="px-[38px] pt-[50px]">
          <button className="flex h-[68px] items-center gap-[31px] text-[#2280e0]">
            <svg viewBox="0 0 34 58" className="h-[58px] w-[34px]" fill="none" stroke="#0a84ff" strokeWidth="8" strokeLinecap="round" strokeLinejoin="round" aria-hidden="true">
              <path d="M30 4L5 29L30 54" />
            </svg>
            <span className="text-[49px] leading-none">返回</span>
          </button>
        </nav>
        <h1 className="mt-[65px] px-[60px] text-[96px] leading-[120px] font-bold text-white">
          检测到 <span className="font-['Noto_Sans_CJK_KR',sans-serif] leading-none" lang="ko">“</span>我的音乐
          <span className="font-['Noto_Sans_CJK_KR',sans-serif] leading-none" lang="ko">”</span> 时
        </h1>
        <SearchField />
        <GettingStarted />
        <section className="mt-[71px] overflow-hidden">
          <Mosaic tiles={sectionTiles} viewBox="0 59 1568 355" className="block h-[120px] w-[640px]" />
          <div className="flex">
            <Mosaic tiles={violetTiles} viewBox="0 414 1487 1242" className="h-[420px] w-[607px] shrink-0 overflow-visible" />
            <div className="relative shrink-0">
              <svg viewBox="16 392 1334 1176" preserveAspectRatio="none" className="absolute inset-0 h-[420px] w-[587px]" aria-hidden="true">
                <defs>
                  <linearGradient id="coral" x1="0" y1="0" x2="0.45" y2="1">
                    <stop offset="0" stopColor="#f1686e" />
                    <stop offset="1" stopColor="#ec4e54" />
                  </linearGradient>
                </defs>
                <path d="M70 442H1241V440H1273V543H1282V602H1286V1100H1268V1400H89V1357H82V1000H84V935H57V899H75V602H91V501H70Z" fill="url(#coral)" />
              </svg>
              <Mosaic tiles={coralTiles} viewBox="16 392 1334 1176" className="relative h-[420px] w-[587px] overflow-visible" />
            </div>
            <Mosaic tiles={tealTiles} viewBox="1350 392 218 1176" className="relative h-[420px] w-24 shrink-0 overflow-visible" />
          </div>
        </section>
        <ul className="mt-10">
          {rows.map((row, i) => (
            <li key={i} className={`flex overflow-hidden ${row.height}`}>
              <Mosaic tiles={row.icon} viewBox={row.iconBox} className="h-full w-[200px] shrink-0" />
              <Mosaic tiles={row.text} viewBox={row.textBox} className="h-full w-[700px] shrink-0 overflow-visible" />
            </li>
          ))}
        </ul>
      </main>
    </div>
  );
}
